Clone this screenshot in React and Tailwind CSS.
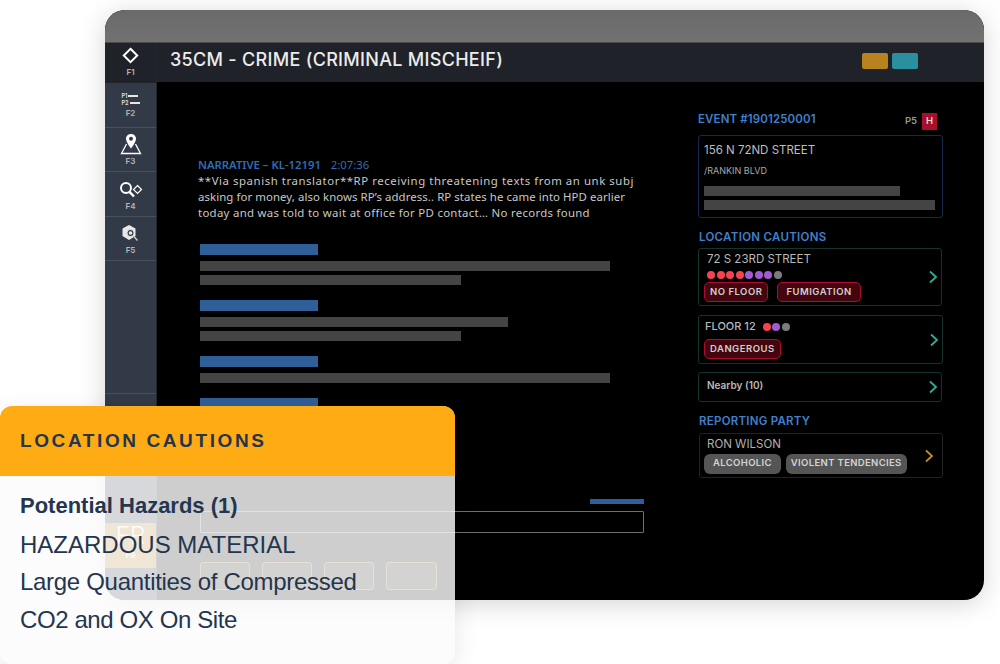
import React from "react";

function SideItem({ label, active, tall, iconClass = "", children }) {
  return (
    <div className={`flex flex-col items-center justify-end border-b ${tall ? "h-[40px] bg-[#1f2329] border-[#1f2329]" : "h-[44.5px] bg-[#333a47] border-[#4a505c]"} ${active ? "pb-[9px]" : "pb-[5px]"}`}>
      <div className={`h-[24px] flex items-center justify-center ${iconClass}`}>{children}</div>
      <div className="text-[8px] leading-[10px] font-semibold text-[#b4b7bc]">{label}</div>
    </div>
  );
}

function Chevron({ color }) {
  return (
    <svg width="10" height="14" viewBox="0 0 10 14" fill="none" stroke={color} strokeWidth="1.8">
      <path d="M2 1.5 L8 7 L2 12.5" />
    </svg>
  );
}

function Dots({ colors }) {
  return (
    <div className="flex gap-[1.5px]">
      {colors.map((c, i) => (
        <span key={i} className="w-[8px] h-[8px] rounded-full" style={{ background: c }} />
      ))}
    </div>
  );
}

function RedTag({ children }) {
  return (
    <span className="h-[20px] flex items-center px-[5px] rounded-[5px] border border-[#a8102e] bg-[#45050f] text-[9.5px] font-semibold tracking-[0.5px] text-[#d0d0d0]">
      {children}
    </span>
  );
}

function GrayTag({ children }) {
  return (
    <span className="h-[20px] flex items-center px-[5px] rounded-[6px] bg-[#555555] text-[9.5px] font-semibold tracking-[0.35px] text-[#d4d4d4]">
      {children}
    </span>
  );
}

function Bar({ w, blue }) {
  return <div className={`${w} ${blue ? "h-[11px] bg-[#2f5f98]" : "h-[10px] bg-[#444444]"}`} />;
}

export default function App() {
  const red = "#f4444f";
  const purple = "#a25bd0";
  const gray = "#7c7c7c";

  return (
    <div className="relative w-[1000px] h-[664px] overflow-hidden bg-white font-['Inter',sans-serif]">
      {/* App window */}
      <div className="ml-[105px] mt-[10px] w-[879px] h-[590px] rounded-[20px] overflow-hidden flex flex-col bg-black shadow-[0_4px_26px_rgba(0,0,0,0.17)]">
        <div className="h-[33px] shrink-0 bg-gradient-to-b from-[#6a6a6a] to-[#727272] border-b border-[#4a4a4a]" />

        <div className="flex flex-1 min-h-0">
          {/* Sidebar */}
          <aside className="w-[52px] shrink-0 flex flex-col bg-[#333a47] border-r border-[#23272e]">
            <div className="flex flex-col">
              <SideItem label="F1" tall>
                <svg width="17" height="17" viewBox="0 0 17 17" fill="none" stroke="#fff" strokeWidth="2">
                  <path d="M8.5 1.8 L15.2 8.5 L8.5 15.2 L1.8 8.5 Z" />
                </svg>
              </SideItem>
              <SideItem label="F2" active iconClass="pt-[8px]">
                <div className="flex flex-col text-[5.5px] leading-[7px] font-bold text-[#d8d8d8]">
                  <div className="flex items-center gap-[1px]">P1<span className="w-[10px] h-[1.5px] bg-[#e6e6e6]" /></div>
                  <div className="flex items-center gap-[1px]">P2<span className="w-[10px] h-[1.5px] bg-[#e6e6e6]" /></div>
                </div>
              </SideItem>
              <SideItem label="F3">
                <svg width="22" height="22" viewBox="0 0 22 22" fill="none">
                  <path d="M6.5 11 L1.5 20.5 H20.5 L15.5 11" stroke="#fff" strokeWidth="1.3" />
                  <path d="M11 1 C7.8 1 6 3.3 6 5.8 C6 9.3 11 15.5 11 15.5 C11 15.5 16 9.3 16 5.8 C16 3.3 14.2 1 11 1 Z" fill="#fff" />
                  <circle cx="11" cy="5.8" r="2" fill="#333a47" />
                </svg>
              </SideItem>
              <SideItem label="F4" iconClass="pt-[3px]">
                <svg width="24" height="18" viewBox="0 0 24 18" fill="none" stroke="#fff">
                  <circle cx="7" cy="7" r="5" strokeWidth="2" />
                  <path d="M10.5 10.8 L15 15.5" strokeWidth="2.4" />
                  <path d="M18.5 4.5 L22.5 8.5 L18.5 12.5 L14.5 8.5 Z" strokeWidth="1.2" />
                </svg>
              </SideItem>
              <SideItem label="F5" iconClass="pt-[2px]">
                <svg width="20" height="20" viewBox="0 0 20 20" fill="none">
                  <path d="M8 1 L14.5 4.5 V12 L8 16 L1.5 12 V4.5 Z" fill="#e8e8e8" />
                  <circle cx="9.5" cy="9" r="3.6" fill="#333a47" stroke="#e8e8e8" strokeWidth="1" />
                  <circle cx="9.5" cy="9" r="1.8" fill="#e8e8e8" />
                  <path d="M12.5 12 L16.5 16.5" stroke="#c8c8c8" strokeWidth="1.4" />
                </svg>
              </SideItem>
            </div>
            <div className="mt-[132px] border-t border-[#4a505c]" />
            <div className="mt-[129px] h-[45px] bg-[#b8852a] flex flex-col items-center text-white">
              <span className="text-[24px] leading-[24px] font-light mt-[1px]">FR</span>
              <span className="mt-[2px] text-[8px] leading-[10px] font-semibold">F9</span>
            </div>
          </aside>

          <div className="flex-1 min-w-0 flex flex-col">
            {/* Title bar */}
            <header className="h-[39px] shrink-0 bg-[#1f2329] flex items-center justify-between pl-[13px] pr-[66px]">
              <h1 className="text-[18px] leading-[20px] font-medium tracking-[0.3px] text-[#ececec] -mt-[6px]">
                35CM - CRIME (CRIMINAL MISCHEIF)
              </h1>
              <div className="flex gap-[4px] -mt-[4px]">
                <span className="w-[26px] h-[16px] rounded-[2px] bg-[#b8821f]" />
                <span className="w-[26px] h-[16px] rounded-[2px] bg-[#2a8f9f]" />
              </div>
            </header>

            <div className="flex flex-1 min-h-0">
              {/* Narrative column */}
              <main className="w-[541px] shrink-0 pl-[41px] pt-[76px]">
                <div className="flex items-baseline gap-[10px] text-[11.3px] leading-[14px] font-['Noto_Sans',sans-serif]">
                  <span className="font-semibold text-[#2f6cb4]">NARRATIVE – KL-12191</span>
                  <span className="text-[#2f6cb4]">2:07:36</span>
                </div>
                <p className="mt-[1px] w-[460px] text-[11.4px] leading-[15.8px] text-[#c8c8c8] font-['Noto_Sans',sans-serif]">
                  <span className="tracking-[0.56px]">**Via spanish translator**RP receiving threatening texts from an unk subj</span>
                  <br />
                  <span className="tracking-[0.08px]">asking for money, also knows RP’s address.. RP states he came into HPD earlier</span>
                  <br />
                  <span className="tracking-[0.3px]">today and was told to wait at office for PD contact… No records found</span>
                </p>

                <div className="ml-[2px] mt-[24px] flex flex-col">
                  <Bar w="w-[118px]" blue />
                  <div className="mt-[6px]"><Bar w="w-[410px]" /></div>
                  <div className="mt-[4px]"><Bar w="w-[261px]" /></div>
                  <div className="mt-[15px]"><Bar w="w-[118px]" blue /></div>
                  <div className="mt-[6px]"><Bar w="w-[308px]" /></div>
                  <div className="mt-[4px]"><Bar w="w-[261px]" /></div>
                  <div className="mt-[15px]"><Bar w="w-[118px]" blue /></div>
                  <div className="mt-[6px]"><Bar w="w-[410px]" /></div>
                  <div className="mt-[15px]"><Bar w="w-[118px]" blue /></div>
                </div>

                <div className="ml-[2px] mt-[90px] w-[444px]">
                  <div className="ml-auto w-[54px] h-[5px] bg-[#2f5f98]" />
                  <div className="mt-[7px] h-[22px] border border-[#6f6f6f] rounded-[1px]" />
                  <div className="mt-[29px] flex">
                    <div className="w-[50px] h-[28px] rounded-[3px] border border-[#8a6a30] bg-[#1f1d12]" />
                    <div className="ml-[12px] w-[50px] h-[28px] rounded-[3px] border border-[#8a6a30] bg-[#1f1d12]" />
                    <div className="ml-[12px] w-[50px] h-[28px] rounded-[3px] border border-[#8a6a30] bg-[#1f1d12]" />
                    <div className="ml-[12px] w-[51px] h-[28px] rounded-[3px] border border-[#8a6a30] bg-[#1f1d12]" />
                  </div>
                </div>
              </main>

              {/* Right column */}
              <section className="w-[245px] shrink-0 pt-[30px]">
                <div className="flex items-center justify-between h-[17px] pr-[6px]">
                  <span className="text-[11.5px] font-semibold tracking-[0.12px] text-[#3f80cc] -mt-[2px]">EVENT #1901250001</span>
                  <div className="flex items-center gap-[5px] mt-[2px]">
                    <span className="text-[9.5px] font-semibold text-[#9a9a9a]">P5</span>
                    <span className="w-[15px] h-[17px] flex items-center justify-center bg-[#a80f2c] text-[9.5px] font-semibold text-[#e8d8d8]">H</span>
                  </div>
                </div>
                <div className="mt-[6px] h-[83px] rounded-[3px] border border-[#16294c] pl-[5px] pt-[7px]">
                  <div className="text-[11.5px] leading-[15px] text-[#bdbdbd]">156 N 72ND STREET</div>
                  <div className="mt-[7px] text-[9px] leading-[12px] text-[#a8a8a8]">/RANKIN BLVD</div>
                  <div className="mt-[9px] w-[196px] h-[10px] bg-[#444444]" />
                  <div className="mt-[4px] w-[231px] h-[10px] bg-[#444444]" />
                </div>

                <h2 className="mt-[12px] ml-[1px] text-[11.5px] leading-[14px] font-semibold tracking-[0.3px] text-[#3f80cc]">LOCATION CAUTIONS</h2>

                <div className="mt-[4px] w-[244px] h-[58px] rounded-[3px] border border-[#12332f] flex items-center justify-between pl-[5px] pr-[3px]">
                  <div className="flex flex-col self-start pt-[4px]">
                    <div className="ml-[3px] text-[11.5px] leading-[13px] text-[#b8b8b8]">72 S 23RD STREET</div>
                    <div className="ml-[3px] mt-[5px]"><Dots colors={[red, red, red, red, purple, purple, purple, gray]} /></div>
                    <div className="mt-[3px] flex gap-[9px]">
                      <RedTag>NO FLOOR</RedTag>
                      <RedTag><span className="px-[3px]">FUMIGATION</span></RedTag>
                    </div>
                  </div>
                  <Chevron color="#2fae9a" />
                </div>

                <div className="mt-[9px] w-[245px] h-[49px] rounded-[3px] border border-[#12332f] flex items-center justify-between pl-[5px] pr-[3px]">
                  <div className="flex flex-col">
                    <div className="flex items-center gap-[7px] ml-[1px]">
                      <span className="text-[11px] leading-[13px] font-medium text-[#b8b8b8]">FLOOR 12</span>
                      <Dots colors={[red, purple, gray]} />
                    </div>
                    <div className="mt-[6px] flex"><RedTag>DANGEROUS</RedTag></div>
                  </div>
                  <Chevron color="#2fae9a" />
                </div>

                <div className="mt-[8px] w-[244px] h-[30px] rounded-[3px] border border-[#12332f] flex items-center justify-between pl-[8px] pr-[3px]">
                  <span className="text-[10px] font-semibold text-[#b8b8b8] -mt-[4px]">Nearby (10)</span>
                  <Chevron color="#2fae9a" />
                </div>

                <h2 className="mt-[12px] ml-[1px] text-[11.5px] leading-[14px] font-semibold tracking-[0.25px] text-[#3f80cc]">REPORTING PARTY</h2>

                <div className="mt-[5px] ml-[1px] w-[244px] h-[45px] rounded-[3px] border border-[#222222] flex items-center justify-between pl-[4px] pr-[8px]">
                  <div className="flex flex-col">
                    <div className="ml-[3px] text-[11.5px] leading-[13px] text-[#b0b0b0]">RON WILSON</div>
                    <div className="mt-[3px] flex gap-[5px]">
                      <GrayTag><span className="px-[4px]">ALCOHOLIC</span></GrayTag>
                      <GrayTag>VIOLENT TENDENCIES</GrayTag>
                    </div>
                  </div>
                  <Chevron color="#c98a22" />
                </div>
              </section>
            </div>
          </div>
        </div>
      </div>

      {/* Floating caution card */}
      <div className="absolute left-0 top-[406px] w-[455px] h-[258px] rounded-[12px] overflow-hidden bg-[#fbfbfb]/[0.82] shadow-[0_6px_24px_rgba(0,0,0,0.1)] text-[#24364f]">
        <div className="h-[70px] bg-[#ffab14] flex items-center pl-[20px]">
          <span className="text-[19px] font-bold tracking-[2.6px] font-['Liberation_Sans',sans-serif]">LOCATION CAUTIONS</span>
        </div>
        <div className="pl-[20px] pt-[13px] font-['Liberation_Sans',sans-serif]">
          <div className="text-[22px] leading-[34px] font-bold">Potential Hazards (1)</div>
          <div className="mt-[3px] text-[24px] leading-[37px]">HAZARDOUS MATERIAL</div>
          <div className="text-[24px] leading-[38px] tracking-[-0.3px]">Large Quantities of Compressed</div>
          <div className="text-[24px] leading-[38px] tracking-[-0.4px]">CO2 and OX On Site</div>
        </div>
      </div>
    </div>
  );
}
